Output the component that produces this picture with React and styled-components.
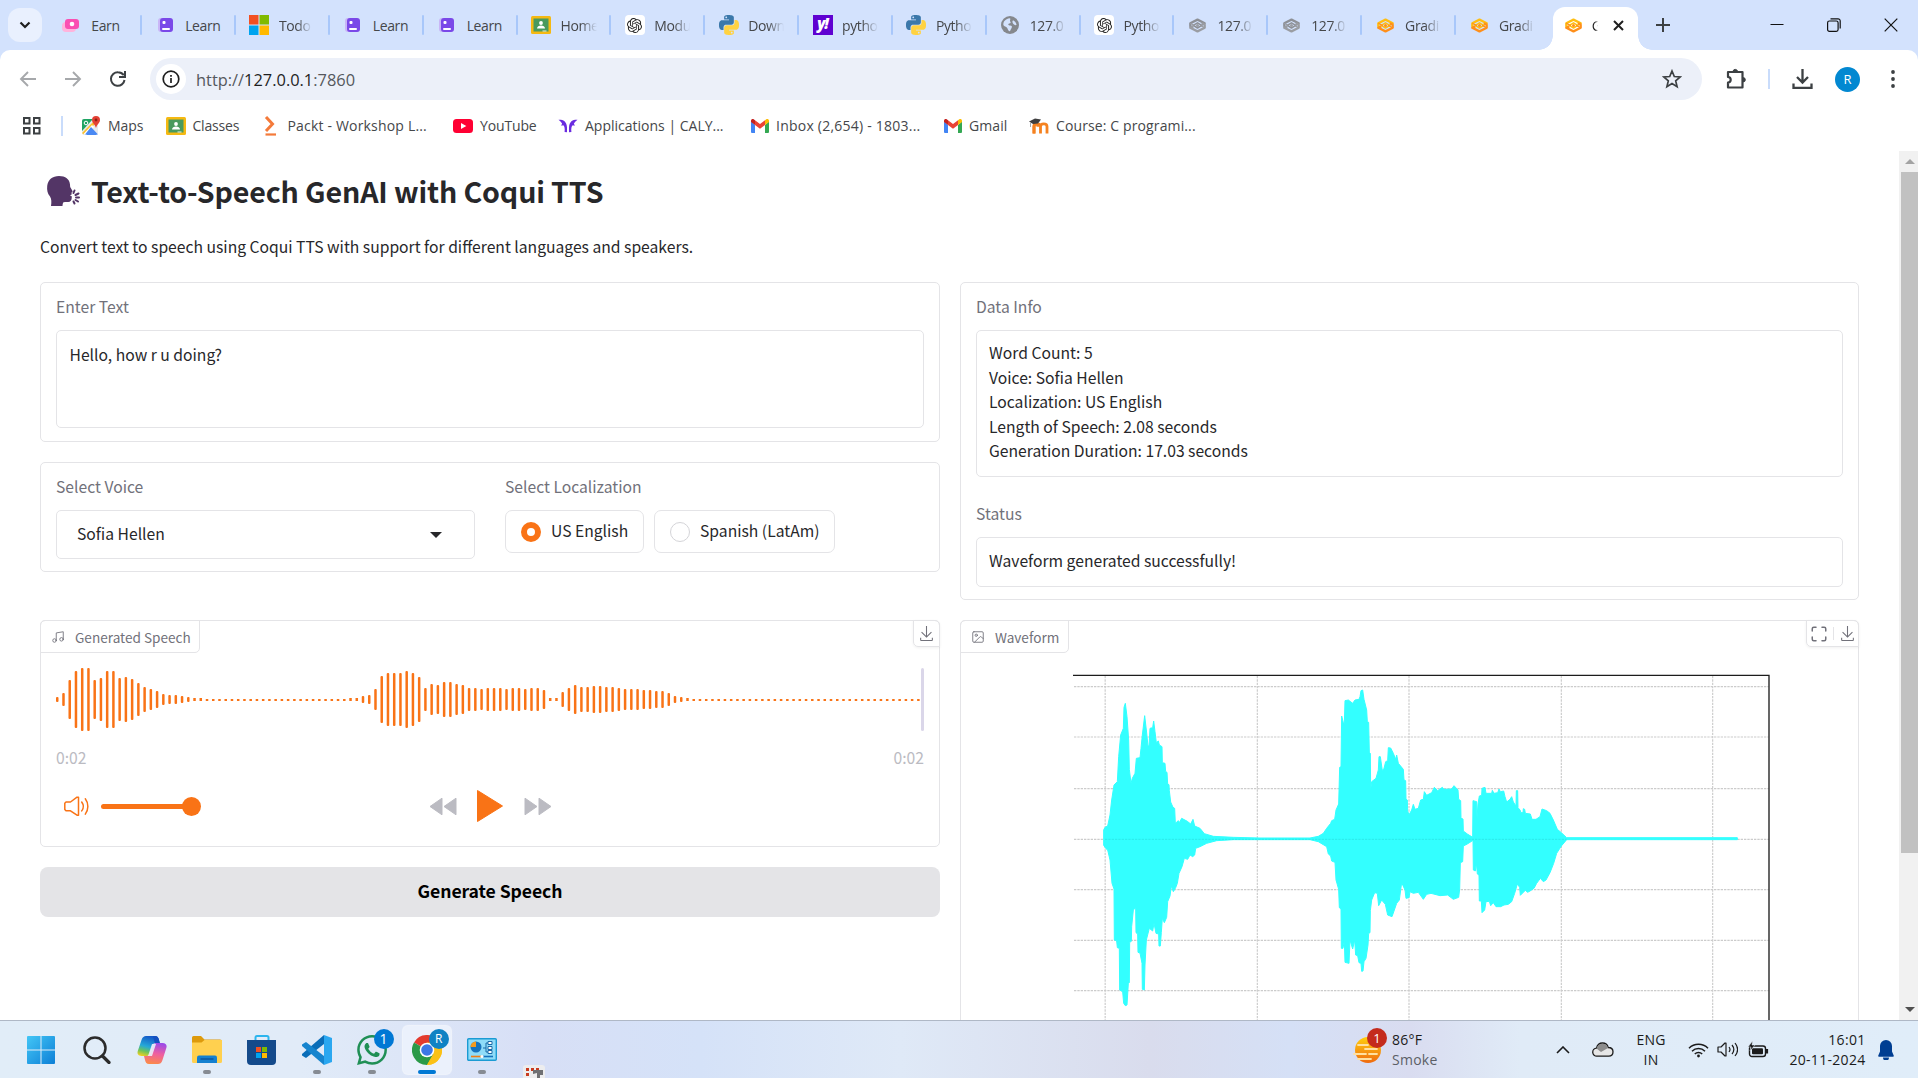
import React from "react";
import styled, { createGlobalStyle } from "styled-components";
import { Maximize, Image as ImageIcon, Music } from "lucide-react";
import { SiOpenai, SiWhatsapp } from "react-icons/si";

const ui = `"Open Sans", "Noto Sans", sans-serif`;
const body = `"Noto Sans CJK SC", "Noto Sans", sans-serif`;

const Global = createGlobalStyle`
  * { box-sizing: border-box; }
  body { margin: 0; background: #fff; overflow: hidden; }
  svg { display: block; flex: none; }
`;

const Screen = styled.div`
  width: 1918px;
  height: 1078px;
  display: flex;
  flex-direction: column;
  overflow: hidden;
  background: #fff;
`;

/* ---------- browser chrome ---------- */

const TabStrip = styled.div`
  height: 50px;
  flex: none;
  background: #d3e2fd;
  display: flex;
  align-items: center;
  padding-left: 8px;
  font: 14px/20px ${ui};
  color: #45474a;
`;
const TabSearch = styled.div`
  width: 34px;
  height: 34px;
  border-radius: 12px;
  background: #e9f0fe;
  display: flex;
  align-items: center;
  justify-content: center;
  margin-right: 5.3px;
  flex: none;
`;
const Tab = styled.div`
  width: 93.85px;
  height: 50px;
  flex: none;
  display: flex;
  align-items: center;
  padding-left: 14px;
  gap: 9px;
  position: relative;
  &::after {
    content: "";
    position: absolute;
    right: -1px;
    top: 15px;
    width: 2px;
    height: 20px;
    border-radius: 1px;
    background: ${(p) => (p.$last ? "transparent" : "#a8c7fa")};
  }
`;
const Fav = styled.div`
  width: 21px;
  display: flex;
  justify-content: center;
  flex: none;
`;
const TabTitle = styled.div`
  width: ${(p) => p.$w || 36}px;
  overflow: hidden;
  white-space: nowrap;
  letter-spacing: -0.4px;
  padding-top: 1px;
  ${(p) => p.$fade && `mask-image: linear-gradient(90deg, #000 55%, transparent 100%);`}
`;
const ActiveTab = styled.div`
  width: 85.5px;
  height: 43px;
  margin: 7px 0 0 4px;
  flex: none;
  background: #fff;
  border-radius: 12px 12px 0 0;
  display: flex;
  align-items: center;
  gap: 8px;
  padding: 0 0 7px 10px;
  position: relative;
  color: #1f1f1f;
  &::before, &::after {
    content: "";
    position: absolute;
    bottom: 0;
    width: 14px;
    height: 14px;
  }
  &::before { left: -14px; background: radial-gradient(circle at 0 0, transparent 13.5px, #fff 14px); }
  &::after { right: -14px; background: radial-gradient(circle at 100% 0, transparent 13.5px, #fff 14px); }
`;
const CloseTab = styled.div`
  margin-left: 7px;
`;
const WindowButtons = styled.div`
  margin-left: auto;
  padding-right: 20px;
  display: flex;
  gap: 43px;
  align-items: center;
`;
const NewTab = styled.div`
  margin-left: 18px;
`;
const ToolbarRow = styled.div`
  height: 58px;
  flex: none;
  display: flex;
  align-items: center;
  border-radius: 10px 10px 0 0;
  background: #fff;
`;
const ToolbarShell = styled.div`
  background: #d3e2fd;
  flex: none;
`;
const NavButtons = styled.div`
  width: 150px;
  padding-left: 19px;
  display: flex;
  gap: 27px;
  align-items: center;
`;
const Omnibox = styled.div`
  width: 1552px;
  height: 42px;
  border-radius: 21px;
  background: #ecf0f9;
  display: flex;
  align-items: center;
  padding: 0 20px 0 6px;
  flex: none;
`;
const InfoDot = styled.div`
  width: 30px;
  height: 30px;
  border-radius: 50%;
  background: #fff;
  display: flex;
  align-items: center;
  justify-content: center;
`;
const Url = styled.div`
  font: 16.4px/24px ${ui};
  letter-spacing: 0;
  margin-left: 10px;
  padding-top: 1px;
  flex: 1;
  color: #55585d;
  b { font-weight: 400; color: #1f1f1f; }
`;
const ToolbarRight = styled.div`
  display: flex;
  align-items: center;
  padding-left: 23px;
`;
const Sep = styled.div`
  width: 2px;
  height: 20px;
  background: #c9dcfb;
  margin: 0 ${(p) => p.$r}px 0 ${(p) => p.$l}px;
`;
const Avatar = styled.div`
  width: 25px;
  height: 25px;
  border-radius: 50%;
  background: #0288d1;
  color: #fff;
  font: 13px/25px ${ui};
  text-align: center;
  margin: 0 31px 0 22px;
`;
const Bookmarks = styled.div`
  height: 43px;
  flex: none;
  display: flex;
  align-items: center;
  padding: 0 0 7px 22px;
  font: 14px/20px ${ui};
  color: #45474a;
`;
const Bookmark = styled.div`
  width: ${(p) => p.$w}px;
  display: flex;
  align-items: center;
  gap: 7px;
  white-space: nowrap;
  letter-spacing: ${(p) => p.$ls}px;
`;

/* ---------- page ---------- */

const Viewport = styled.div`
  height: 869px;
  flex: none;
  display: flex;
  overflow: hidden;
`;
const Page = styled.main`
  width: 1899px;
  flex: none;
  padding: 0 40px;
  font: 15.68px/24.5px ${body};
  color: #27272a;
`;
const Heading = styled.h1`
  margin: 18px 0 0 6px;
  height: 44px;
  display: flex;
  align-items: center;
  gap: 11px;
  font: 600 28.6px/44px ${body};
  letter-spacing: -0.14px;
  white-space: nowrap;
`;
const Lead = styled.p`
  margin: 22px 0 0;
  height: 24px;
`;
const Columns = styled.div`
  margin-top: 23px;
  display: flex;
  gap: 20px;
  align-items: flex-start;
`;
const Column = styled.div`
  width: ${(p) => p.$w}px;
  display: flex;
  flex-direction: column;
`;
const Card = styled.section`
  height: ${(p) => p.$h}px;
  margin-bottom: ${(p) => p.$mb || 0}px;
  border: 1px solid #e4e4e7;
  border-radius: 5px;
  padding: ${(p) => p.$pad || "12px 15px"};
  position: relative;
  display: flex;
  flex-direction: ${(p) => (p.$row ? "row" : "column")};
`;
const Label = styled.div`
  color: #71717a;
  height: 24px;
  margin: 0 0 11px;
`;
const Field = styled.div`
  border: 1px solid #e4e4e7;
  border-radius: 5px;
  height: ${(p) => p.$h}px;
  margin-bottom: ${(p) => p.$mb || 0}px;
  padding: ${(p) => p.$pad};
  flex: none;
  white-space: pre-line;
`;
const Group = styled.div`
  width: ${(p) => p.$w}px;
  margin-right: ${(p) => p.$mr || 0}px;
`;
const Select = styled(Field)`
  display: flex;
  justify-content: space-between;
  align-items: center;
`;
const Radios = styled.div`
  display: flex;
  gap: 10px;
`;
const Radio = styled.div`
  width: ${(p) => p.$w}px;
  height: 43px;
  border: 1px solid #e4e4e7;
  border-radius: 7px;
  display: flex;
  align-items: center;
  padding-left: 15px;
  gap: 10px;
  white-space: nowrap;
`;
const Dot = styled.span`
  width: 20px;
  height: 20px;
  border-radius: 50%;
  flex: none;
  background: #fff;
  border: ${(p) => (p.$on ? "6px solid #f97316" : "1px solid #d4d4d8")};
`;
const MediaLabel = styled.div`
  position: absolute;
  left: -1px;
  top: -1px;
  height: 33px;
  width: ${(p) => p.$w}px;
  border: 1px solid #e4e4e7;
  border-radius: 5px 0 5px 0;
  display: flex;
  align-items: center;
  padding: 1px 0 0 10px;
  gap: 10px;
  color: #71717a;
  font-size: 13.6px;
  white-space: nowrap;
`;
const MediaTools = styled.div`
  position: absolute;
  right: -1px;
  top: -1px;
  height: 27px;
  width: ${(p) => p.$w}px;
  border: 1px solid #e4e4e7;
  border-radius: 0 5px 0 5px;
  box-shadow: 0 1px 3px rgba(0, 0, 0, 0.06);
  display: flex;
  align-items: center;
  justify-content: center;
  gap: 5px;
  color: #71717a;
`;
const ToolDivider = styled.i`
  width: 1px;
  height: 13px;
  background: #e4e4e7;
`;
const Bars = styled.div`
  margin-top: 35px;
  height: 63px;
  width: 868px;
  display: flex;
`;
const Times = styled.div`
  display: flex;
  justify-content: space-between;
  color: #bbbbc2;
  margin-top: 15px;
  height: 24px;
`;
const Controls = styled.div`
  display: grid;
  grid-template-columns: 1fr auto 1fr;
  align-items: center;
  height: 34px;
  margin-top: 19px;
`;
const Volume = styled.div`
  display: flex;
  align-items: center;
  gap: 12px;
  padding-left: 7px;
`;
const Slider = styled.div`
  width: 100px;
  height: 5px;
  border-radius: 3px;
  background: linear-gradient(90deg, #f97316 90px, #fff 90px);
  display: flex;
  justify-content: flex-end;
  align-items: center;
  &::after {
    content: "";
    width: 19px;
    height: 19px;
    border-radius: 50%;
    background: #f97316;
  }
`;
const Transport = styled.div`
  display: flex;
  align-items: center;
  gap: 19.5px;
`;
const Generate = styled.button`
  height: 50px;
  border: 0;
  border-radius: 8px;
  background: #e4e4e7;
  color: #000;
  padding: 0 0 2px;
  font: 600 17.6px/28px ${body};
  letter-spacing: -0.08px;
`;
const PlotHolder = styled.div`
  padding-left: 99px;
`;
const Scrollbar = styled.div`
  width: 19px;
  background: #f1f1f1;
  display: flex;
  flex-direction: column;
  align-items: flex-end;
`;
const Thumb = styled.div`
  width: 17px;
  height: 681px;
  background: #c1c1c1;
`;
const Arrow = styled.div`
  width: 17px;
  height: 21px;
  display: flex;
  align-items: center;
  justify-content: center;
  margin-top: ${(p) => (p.$end ? "auto" : 0)};
`;

/* ---------- taskbar ---------- */

const Taskbar = styled.footer`
  height: 58px;
  flex: none;
  border-top: 1px solid #afb8c6;
  background: linear-gradient(90deg, #e1edf8 0, #e1ebf8 300px, #d7dff6 540px, #d5e2f8 700px, #dfe9f7 900px, #d9dced 1150px, #d5e0f6 1290px, #d9dcf0 1410px, #e0ebf7 1520px, #e0edf9 1918px);
  display: flex;
  font: 14px/20px ${ui};
  color: #1b1b1b;
`;
const Apps = styled.div`
  display: flex;
  padding-left: 14px;
  width: 1353px;
`;
const TaskApp = styled.div`
  width: 55.1px;
  height: 57px;
  flex: none;
  position: relative;
  display: flex;
  justify-content: center;
  align-items: center;
`;
const AppTile = styled.div`
  width: 48px;
  height: 48px;
  border-radius: 5px;
  display: flex;
  align-items: center;
  justify-content: center;
  ${(p) => p.$active && "background: #ebf1fc; box-shadow: 0 0 1px 1px rgba(255,255,255,.6);"}
`;
const Running = styled.i`
  position: absolute;
  bottom: 4px;
  width: ${(p) => (p.$active ? 18 : 8)}px;
  height: 4px;
  border-radius: 2px;
  background: ${(p) => (p.$active ? "#0078d4" : "#868b93")};
`;
const Badge = styled.span`
  position: absolute;
  left: ${(p) => p.$x}px;
  top: ${(p) => p.$y}px;
  width: 20px;
  height: 20px;
  border-radius: 50%;
  background: ${(p) => p.$c};
  color: #fff;
  font: ${(p) => p.$s || 13}px/20px ${ui};
  text-align: center;
`;
const Stray = styled.div`
  align-self: flex-end;
  margin-left: 13px;
`;
const Weather = styled.div`
  display: flex;
  position: relative;
  align-items: center;
  gap: 11px;
  width: 203px;
`;
const TwoLine = styled.div`
  padding-top: 1px;
  text-align: ${(p) => p.$align || "left"};
  letter-spacing: ${(p) => p.$ls || 0}px;
  white-space: nowrap;
  span { color: #5c5f66; }
`;
const Tray = styled.div`
  display: flex;
  align-items: center;
  flex: 1;
`;
const TrayItem = styled.div`
  width: ${(p) => p.$w}px;
  flex: none;
  display: flex;
  justify-content: ${(p) => p.$j || "flex-start"};
`;

/* ---------- icons ---------- */

const LearnIcon = () => (
  <svg width="16" height="16" viewBox="0 0 16 16">
    <rect x="0" y="1" width="14" height="14" rx="3" fill="#c9b6f7" />
    <rect x="2" y="1" width="13" height="14" rx="3" fill="#7a49e8" />
    <rect x="4.500" y="4" width="3" height="3" rx="1" fill="#fff" />
    <rect x="4" y="11" width="8" height="2" rx="1" fill="#fff" />
  </svg>
);
const EarnIcon = () => (
  <svg width="19" height="16" viewBox="0 0 19 16">
    <rect x="0" y="5" width="14" height="10" rx="4" fill="#ffb3dc" />
    <rect x="3" y="2" width="14" height="10" rx="3" fill="#fa4fb2" />
    <circle cx="10" cy="7" r="2.300" fill="#fff" />
  </svg>
);
const MsIcon = () => (
  <svg width="20" height="20" viewBox="0 0 20 20">
    <path fill="#f25022" d="M0 0h9.500v9.500H0z" />
    <path fill="#7fba00" d="M10.500 0H20v9.500h-9.500z" />
    <path fill="#00a4ef" d="M0 10.500h9.500V20H0z" />
    <path fill="#ffb900" d="M10.500 10.500H20V20h-9.500z" />
  </svg>
);
const ClassIcon = () => (
  <svg width="20" height="18" viewBox="0 0 20 18">
    <rect width="20" height="18" rx="1.500" fill="#f5b912" />
    <rect x="2.500" y="2.500" width="15" height="13" fill="#4a9a5d" />
    <circle cx="10" cy="7" r="1.900" fill="#fff" />
    <path d="M6 12.500c0-2 2-3 4-3s4 1 4 3z" fill="#fff" />
    <path d="M11.500 14.500h4v1h-4z" fill="#e8f3e9" />
  </svg>
);
const GptTile = styled.div`
  width: 20px;
  height: 20px;
  border-radius: 4px;
  background: #fff;
  display: flex;
  align-items: center;
  justify-content: center;
  color: #222;
`;
const GptIcon = () => (
  <GptTile>
    <SiOpenai size={15} />
  </GptTile>
);
const PyIcon = () => (
  <svg width="20" height="20" viewBox="0 0 24 24">
    <path fill="#3b78aa" d="M14.250.18l.9.200.730.260.590.300.450.320.340.340.250.340.160.330.100.300.040.260.020.200-.010.130V8.500l-.050.630-.130.550-.210.460-.260.380-.300.310-.330.250-.350.190-.350.140-.330.100-.300.070-.260.040-.210.020H8.770l-.690.050-.590.140-.500.220-.410.270-.330.320-.270.350-.200.360-.150.370-.100.350-.070.320-.040.270-.020.210v3.060H3.170l-.210-.030-.280-.070-.320-.120-.350-.180-.360-.260-.360-.360-.350-.460-.320-.590-.280-.730-.210-.880-.140-1.050-.050-1.230.060-1.220.160-1.040.240-.870.320-.710.360-.570.400-.440.420-.330.420-.240.400-.160.360-.100.320-.050.240-.010h.160l.060.010h8.160v-.830H6.180l-.010-2.750-.020-.370.050-.340.110-.310.170-.280.250-.260.310-.230.380-.200.440-.180.510-.150.580-.120.640-.100.710-.060.770-.040.840-.020 1.270.050zm-6.300 1.980l-.230.330-.080.410.080.410.230.340.330.220.410.090.410-.090.330-.220.230-.340.080-.410-.080-.410-.230-.330-.330-.220-.410-.090-.410.090z" />
    <path fill="#ffd242" d="M21.040 6.110l.280.060.320.120.350.180.360.270.360.350.350.470.320.590.280.730.210.880.140 1.040.050 1.230-.060 1.230-.160 1.040-.240.860-.320.710-.360.570-.400.450-.420.330-.420.240-.400.160-.360.090-.320.050-.240.020-.160-.010h-8.220v.820h5.840l.010 2.760.020.360-.050.340-.110.310-.170.290-.250.250-.310.240-.380.200-.440.170-.510.150-.580.130-.640.090-.710.070-.770.040-.840.010-1.270-.040-1.070-.140-.900-.200-.730-.250-.590-.300-.450-.330-.340-.340-.250-.340-.160-.330-.100-.300-.040-.250-.020-.200.010-.130v-5.340l.050-.640.130-.540.210-.460.260-.380.300-.320.330-.240.350-.200.350-.140.330-.100.300-.060.260-.040.210-.020.130-.010h5.840l.690-.050.590-.140.500-.210.410-.280.330-.320.270-.350.200-.360.150-.360.100-.350.070-.320.040-.280.020-.210V6.070h2.090l.140.010zm-6.470 14.250l-.230.330-.080.410.080.410.230.330.330.230.410.080.410-.080.330-.230.230-.330.080-.410-.080-.410-.230-.330-.330-.230-.410-.080-.410.080z" />
  </svg>
);
const YahooTile = styled.div`
  width: 20px;
  height: 20px;
  background: #5f01d1;
  color: #fff;
  font: italic 800 15px/17px ${ui};
  letter-spacing: -1px;
  text-align: center;
`;
const GlobeIcon = () => (
  <svg width="18" height="18" viewBox="0 0 18 18">
    <circle cx="9" cy="9" r="9" fill="#85888d" />
    <path d="M3 5.500C4.500 3.500 6.500 2.300 9 2.200c1 1-.5 2.200.2 3.200 1 1 .3 2-1 2.100C6.500 8 7.500 9.500 9 9.600c2 .2 2.300 1.300 1.600 2.400-.7 1-1 2-1.600 3.300-2 .2-2-2.500-3.200-3.700C4.600 10.500 2.300 10 2.300 8.500c0-1 .2-2 .7-3zM12 4.500c1.500 0 3.500 2.500 3.500 4.500-1.500.5-3-.5-3.500-1.500s-1-2.500 0-3z" fill="#d3e2fd" />
  </svg>
);
const GradioIcon = ({ gray }) => {
  const a = gray ? "#9a9da3" : "#ff8f1a";
  const b = gray ? "#8d9096" : "#ffbe12";
  return (
    <svg width="17" height="15" viewBox="0 0 17 15" fill="none" strokeLinejoin="round">
      <path d="M4 9.800L1.300 8.200V5.200L8.500 1.600l7.200 3.600-3 1.500" stroke={b} strokeWidth="2.300" />
      <path d="M13 5.200l2.700 1.600v3L8.500 13.400 1.300 9.800l3-1.500" stroke={a} strokeWidth="2.300" />
      <path d="M4.300 7.300l4.200-2.500 4.200 2.500-4.200 2.700z" stroke={b} strokeWidth="1.500" />
      <circle cx="8.500" cy="7.400" r="1.500" fill={a} />
      <path d="M1.300 5.200l4.500 2.400M15.700 9.800l-4.500-2.400" stroke={a} strokeWidth="1.300" />
    </svg>
  );
};
const MapsIcon = () => (
  <svg width="20" height="20" viewBox="0 0 20 20">
    <rect x="1" y="3" width="16" height="16" rx="2" fill="#e8eaed" />
    <path d="M1 5a2 2 0 012-2h9L1 15z" fill="#1fa463" />
    <path d="M1 17L14 4l2 2L3 19z" fill="#fbc02d" />
    <path d="M9 12l7 7H3z" fill="#4a89f3" />
    <path d="M2 18.500L11 9l2 2-8 8z" fill="#fff" />
    <path d="M10 11l7 7.500H4z" fill="#4a89f3" />
    <path d="M15 0a4 4 0 00-4 4c0 3 3 4 4 8 1-4 4-5 4-8a4 4 0 00-4-4z" fill="#e34133" />
    <circle cx="15" cy="4" r="1.400" fill="#8c1f16" />
    <circle cx="5" cy="7" r="1.800" fill="none" stroke="#fff" />
  </svg>
);
const PacktIcon = () => (
  <svg width="20" height="20" viewBox="0 0 20 20" fill="none" stroke="#f47a3a" strokeWidth="3">
    <path d="M5 1l6.500 7L5 15" />
    <path d="M4.500 18.500h10.500" strokeWidth="2.200" />
  </svg>
);
const YouTubeIcon = () => (
  <svg width="20" height="14" viewBox="0 0 20 14">
    <rect width="20" height="14" rx="3.500" fill="#ff0033" />
    <path d="M8 4l5.300 3L8 10z" fill="#fff" />
  </svg>
);
const CalyIcon = () => (
  <svg width="20" height="14" viewBox="0 0 20 14">
    <path fill="#6a2be0" d="M.5.8c4-.3 8.300 1.200 8.500 7.700v4.700L6.600 13c.4-3.500 0-5.500-1.300-6.800L3.200 6.800l.9-2.300C3.200 3 2 1.800.5.8z" />
    <path fill="#6a2be0" d="M19.500.8c-4-.3-8.300 1.200-8.500 7.700v4.700l2.400-.2c-.4-3.500 0-5.500 1.300-6.800l2.100.6-.9-2.300c.9-1.500 2.100-2.700 3.600-3.700z" />
  </svg>
);
const GmailIcon = () => (
  <svg width="18" height="14" viewBox="0 0 18 14">
    <path d="M0 2.500V13a1 1 0 001 1h3V6z" fill="#4285f4" />
    <path d="M18 2.500V13a1 1 0 01-1 1h-3V6z" fill="#34a853" />
    <path d="M14 1.200V6l4-3V1.800C18 .2 16.300-.5 15 .4z" fill="#fbbc04" />
    <path d="M0 1.800V3l4 3V1.200L3 .4C1.700-.5 0 .2 0 1.800z" fill="#c5221f" />
    <path d="M4 1.200V6l5 3.800L14 6V1.200L9 5z" fill="#ea4335" />
  </svg>
);
const MoodleIcon = () => (
  <svg width="20" height="16" viewBox="0 0 20 16" fill="none">
    <path d="M5 15.500V8.800c0-4 4-4 4 0" stroke="#f58220" strokeWidth="3" />
    <path d="M5 15.500V8.500c0-3.500 6.500-3.500 6.500 0v7M11.500 15.500v-7c0-3.500 6.500-3.500 6.500 0v7" stroke="#f58220" strokeWidth="2.800" />
    <path d="M0 3.500L6 .5l6 1-3 4-5 .5z" fill="#3f3f40" />
    <path d="M1.500 4v5" stroke="#a8a8a8" />
  </svg>
);
const DownloadIcon = ({ size = 17 }) => (
  <svg width={size} height={size} viewBox="0 0 32 32" fill="currentColor">
    <path d="M26 24v4H6v-4H4v4a2 2 0 0 0 2 2h20a2 2 0 0 0 2-2v-4zm0-10l-1.410-1.410L17 20.170V2h-2v18.170l-7.590-7.580L6 14l10 10l10-10z" />
  </svg>
);
const HeadIcon = () => (
  <svg width="34" height="32" viewBox="0 0 34 32">
    <path fill="#533566" d="M5 31c.6-4 .6-7-1-9.500C1.500 18.500.8 15 1.200 11 2 4.500 6.500 1 13 1c6.500 0 10.500 3 11 8.500.1 1.600 0 2.300.8 3.600l1.700 2.800c.3.700 0 1.100-1 1.500l.2 2-1.800.9 1.800 1c.3 2-.2 4.700-2 5.400-1.800.5-4.200 0-6.200.5-.8.800-.9 2.300-1 3.800z" />
    <g stroke="#533566" strokeWidth="2" strokeLinecap="round">
      <path d="M27.500 18l1-2.500M29.500 20l3-1.500M30 22.500h3M29.500 25l2.500 1.500M27.500 26.500l1 2" />
    </g>
  </svg>
);
const SpeakerIcon = () => (
  <svg width="26" height="21" viewBox="0 0 26 21" fill="none" stroke="#f97316" strokeWidth="1.500" strokeLinejoin="round" strokeLinecap="round">
    <path d="M3 6h4.500L14 1.200h1.500v18H14L7.500 14.800H3L1.800 13.500V7.200z" />
    <path d="M18.700 6c2 2.700 2 6.200 0 8.900M22.300 2.800c3.400 4.500 3.400 10.800 0 15.300" />
  </svg>
);
const SkipIcon = ({ back }) => (
  <svg width="28" height="19" viewBox="0 0 28 19" fill="#bbbbc2" stroke="#bbbbc2" strokeLinejoin="round">
    <g transform={back ? "translate(28 0) scale(-1 1)" : undefined}>
      <path d="M1 1.200L13 9.500 1 17.800zM15 1.200l12 8.300-12 8.300z" />
    </g>
  </svg>
);

/* ---------- audio bars ---------- */

const flat = (n) => Array(n).fill(2);
const barHeights = [
  5, 13, 39, 57, 63, 63, 39, 43, 57, 57, 43, 45, 41, 33, 25, 21, 17, 11, 9, 9, 7, 5, 3, 3,
  ...flat(23),
  3, 3, 7, 9, 21, 47, 53, 53, 53, 57, 53, 45, 23, 31, 29, 35, 35, 31, 29, 23, 23, 21, 23, 23,
  23, 21, 23, 23, 21, 23, 23, 19, 3, 3, 15, 23, 29, 25, 25, 27, 27, 25, 25, 23, 21, 21, 21,
  19, 19, 17, 17, 13, 7, 5, 3,
  ...flat(37),
];
const AudioBars = () => (
  <svg width="868" height="63" viewBox="0 0 868 63">
    {barHeights.map((h, i) => (
      <rect key={i} x={i * 6.24} y={31.500 - h / 2 + (h === 2 ? 0.5 : 0)} width="2.500" height={h} rx={h > 3 ? 1 : 0} fill="#f97316" />
    ))}
    <rect x="865" y="0" width="3" height="63" rx="1.500" fill="#dad6e9" />
  </svg>
);

/* ---------- plot ---------- */

const envelope =
  "131,660 135,652 143,648 150,615 155,570 162,525 172,515 176,440 182,375 190,355 192,292 196,280 201,320 206,390 208,478 213,520 217,505 225,490 229,445 240,443 243,415 247,375 254,317 259,360 264,408 267,408 270,355 278,353 281,333 285,365 289,398 295,393 298,405 306,410 307,458 315,460 317,485 321,487 323,522 327,524 328,542 332,576 339,592 344,595 346,640 355,632 358,638 365,625 382,634 392,642 399,628 404,648 420,655 433,671 460,679 520,682 600,684 750,684 775,679 790,670 800,655 812,640 815,632 824,628 828,600 836,582 839,472 843,470 845,318 850,338 853,340 855,272 865,270 878,280 885,270 897,268 900,260 903,242 908,240 912,268 920,300 922,335 926,337 928,427 931,430 932,540 935,515 948,505 955,480 957,440 961,440 967,482 972,475 977,455 983,452 985,413 992,414 1000,430 1007,448 1010,435 1015,460 1030,478 1032,510 1037,512 1038,568 1042,570 1043,603 1047,615 1055,600 1060,583 1065,598 1075,595 1082,570 1090,568 1093,545 1100,556 1115,548 1123,532 1133,542 1147,532 1152,538 1175,537 1182,527 1194,540 1196,568 1202,572 1203,625 1209,627 1210,663 1222,672 1238,682 " +
  "1239,572 1250,575 1251,625 1254,582 1258,558 1265,556 1266,535 1275,532 1278,550 1295,550 1297,541 1302,550 1313,548 1317,537 1321,545 1331,543 1335,560 1340,576 1350,568 1355,560 1360,576 1368,588 1369,542 1373,542 1374,593 1380,600 1383,608 1389,608 1390,596 1394,598 1396,610 1411,612 1416,628 1428,628 1440,620 1446,597 1460,602 1470,610 1480,630 1492,658 1504,668 1520,683 2032,683 " +
  "2032,689 1520,689 1504,708 1490,730 1481,760 1470,788 1458,810 1450,815 1441,805 1430,820 1422,835 1410,843 1403,847 1396,841 1381,856 1379,832 1372,822 1364,850 1355,875 1345,883 1332,885 1322,890 1308,890 1300,878 1292,887 1288,874 1278,875 1274,900 1266,908 1264,873 1258,873 1257,795 1252,792 1249,758 1246,783 1240,780 1239,691 " +
  "1222,702 1210,708 1208,755 1201,758 1199,838 1196,862 1180,868 1163,855 1140,857 1113,850 1100,853 1090,868 1075,847 1060,850 1050,845 1047,863 1038,865 1035,840 1025,818 1018,870 1010,880 1003,900 996,920 983,915 976,883 965,870 956,887 952,850 944,848 935,870 931,902 930,968 926,970 924,1005 918,1045 912,1055 909,1083 905,1084 903,1060 897,1058 893,1037 887,1035 884,990 878,1017 870,990 867,1060 855,1057 853,992 849,1015 844,1015 843,897 838,893 836,838 828,810 825,757 815,753 812,738 805,732 800,710 790,704 775,695 750,689 520,689 470,692 440,700 420,710 407,715 404,735 398,740 390,735 383,748 373,745 366,770 357,790 352,820 347,833 340,845 334,828 330,858 323,875 320,922 313,938 307,925 304,967 301,1008 297,1008 296,972 288,970 282,940 278,963 268,955 259,990 255,1065 253,1140 247,1138 246,1060 240,1029 234,1027 233,972 228,968 227,893 220,900 215,950 214,994 209,997 208,1118 205,1120 201,1185 196,1187 191,1180 188,1145 179,1140 178,1015 172,1013 170,993 163,990 162,837 156,820 150,750 143,720 138,716 131,706";

const Plot = () => (
  <svg width="720" height="400" viewBox="0 135 2160 1200">
    <g stroke="#cccccc" strokeWidth="3.500" strokeDasharray="7 3">
      {[230, 381, 536, 688, 839, 991, 1142, 1294].map((y) => (
        <line key={y} x1="42" x2="2126" y1={y} y2={y} />
      ))}
      {[135.5, 592, 1047, 1504, 1958].map((x) => (
        <line key={x} x1={x} x2={x} y1="198" y2="1335" />
      ))}
    </g>
    <polygon points={envelope} fill="#33ffff" stroke="#33ffff" strokeWidth="3" strokeLinejoin="round" />
    <path d="M135 688H1520" stroke="#2ae6e6" strokeWidth="2.500" strokeDasharray="7 3" />
    <path d="M39 196H2127V1335" fill="none" stroke="#1c1c1c" strokeWidth="4" />
  </svg>
);

/* ---------- taskbar icons ---------- */

const StartIcon = () => (
  <svg width="30" height="30" viewBox="0 0 30 30">
    <defs>
      <linearGradient id="st" x1="0" y1="0" x2="1" y2="1" gradientUnits="objectBoundingBox">
        <stop offset="0" stopColor="#43c6f6" />
        <stop offset="1" stopColor="#0d7fd6" />
      </linearGradient>
    </defs>
    <path fill="url(#st)" d="M0 2a1 1 0 011-1h12.500v13.500H0zM14.500 1H27a1 1 0 011 1v12.500H14.500zM0 15.500h13.500V29H1a1 1 0 01-1-1zM14.500 15.500H28V28a1 1 0 01-1 1H14.500z" />
  </svg>
);
const FindIcon = () => (
  <svg width="28" height="28" viewBox="0 0 28 28" fill="none" stroke="#2b2b2b">
    <circle cx="12" cy="12" r="10.500" strokeWidth="2.500" />
    <path d="M19.500 20l6.500 6.500" strokeWidth="3.200" strokeLinecap="round" />
  </svg>
);
const CopilotIcon = () => (
  <svg width="30" height="28" viewBox="0 0 30 28">
    <defs>
      <linearGradient id="cpA" x1="0.500" y1="0" x2="0.200" y2="1">
        <stop offset="0" stopColor="#1458c8" />
        <stop offset="0.500" stopColor="#25a8d8" />
        <stop offset="0.750" stopColor="#6bc45c" />
        <stop offset="1" stopColor="#f4d01f" />
      </linearGradient>
      <linearGradient id="cpB" x1="0.600" y1="0" x2="0.400" y2="1">
        <stop offset="0" stopColor="#9c4be8" />
        <stop offset="0.500" stopColor="#ef5fa0" />
        <stop offset="1" stopColor="#fb8a4a" />
      </linearGradient>
    </defs>
    <path fill="url(#cpA)" d="M9 0h9c2.500 0 3.300 1.500 4 4l.8 3h-4c-2 0-3 1-3.500 3l-2 7c-.6 2-1.600 3-3.800 3H4.500C1.500 20 0 18 .7 15.300L4.500 4C5.500 1 7 0 9 0z" />
    <path fill="url(#cpB)" d="M21 28h-9c-2.500 0-3.300-1.500-4-4l-1-4h3c2 0 3-1 3.500-3l2.300-7c.6-2 1.600-3 3.800-3h6c3 0 4.600 2 3.800 4.700L25.500 24c-1 3-2.500 4-4.500 4z" />
    <path fill="#1450c0" d="M16 0h2c2.500 0 3.300 1.500 4 4l.8 3h-5z" />
    <path fill="#eaf0fb" d="M15 8h4l-4 12h-4z" opacity=".9" />
  </svg>
);
const FolderIcon = () => (
  <svg width="30" height="28" viewBox="0 0 30 28">
    <path d="M0 1.500A1.500 1.500 0 011.500 0H9l3.500 3.500H28A2 2 0 0130 5.500V12H0z" fill="#dd9a0c" />
    <path d="M0 6.500h9.500L12.500 4H30v21.500a1.500 1.500 0 01-1.500 1.500h-27A1.500 1.500 0 010 25.500z" fill="#ffd04f" />
    <path d="M5 27v-5.500A2 2 0 017 19.500h16a2 2 0 012 2V27z" fill="#1480d0" />
    <path d="M8.500 23h13" stroke="#0b4f96" strokeWidth="1.300" />
  </svg>
);
const StoreIcon = () => (
  <svg width="30" height="30" viewBox="0 0 30 30">
    <path d="M8.500 7V2.500A1.500 1.500 0 0110 1h10a1.500 1.500 0 011.500 1.500V7" stroke="#2cb5ee" strokeWidth="2" fill="none" />
    <path d="M0 5h29v21a4 4 0 01-4 4H4a4 4 0 01-4-4z" fill="#144a8b" />
    <path fill="#f25022" d="M9 12h5v5H9z" />
    <path fill="#7fba00" d="M15 12h5v5h-5z" />
    <path fill="#00a4ef" d="M9 18h5v5H9z" />
    <path fill="#ffb900" d="M15 18h5v5h-5z" />
  </svg>
);
const CodeIcon = () => (
  <svg width="30" height="30" viewBox="0 0 30 30">
    <path d="M22 0v9L4 23 0 20.500v-1.500z" fill="#0a6db8" />
    <path d="M22 30v-9L4 7 0 9.500v1.500z" fill="#1684ce" />
    <path d="M22 0l8 3v24l-8 3z" fill="#2aa7f0" />
  </svg>
);
const ChromeIcon = () => (
  <svg width="30" height="30" viewBox="0 0 30 30">
    <path d="M15 15L2 7.500A15 15 0 0128 7.500z" fill="#e33b2e" />
    <path d="M15 15l13-7.500A15 15 0 0115 30z" fill="#fbc116" />
    <path d="M15 15v15A15 15 0 012 7.500z" fill="#2b9a48" />
    <path d="M15 30l6.500-11.200L15 15 8.500 18.700z" fill="#2b9a48" />
    <path d="M21.500 18.800L15 30A15 15 0 0028 7.500H15z" fill="#fbc116" />
    <circle cx="15" cy="15" r="7.300" fill="#fff" />
    <circle cx="15" cy="15" r="5.800" fill="#3b78e7" />
  </svg>
);
const PanelIcon = () => (
  <svg width="30" height="23" viewBox="0 0 30 23">
    <rect x=".7" y=".7" width="28.600" height="21.600" rx="1" fill="#8fdcf8" stroke="#1b9bd3" strokeWidth="1.400" />
    <circle cx="9" cy="9" r="5.500" fill="#1673bd" />
    <path d="M9 9V3.500A5.500 5.500 0 003.500 9z" fill="#f59a1d" />
    <path d="M16 10h3M19 5v9M19 5h2M19 14h2" stroke="#1a6aa8" fill="none" />
    <path d="M21 3.500h4v3h-4zM21 8.500h4v3h-4zM21 12.500h4v3h-4z" fill="#fff" stroke="#1a6aa8" />
    <path d="M4 18.500h12" stroke="#f07d13" strokeWidth="1.600" />
    <path d="M16 18.500h10" stroke="#1673bd" strokeWidth="1.600" />
    <circle cx="15" cy="18.500" r="1.500" fill="#fff" />
  </svg>
);
const StrayIcon = () => (
  <svg width="22" height="13" viewBox="0 0 22 13">
    <rect width="22" height="16" rx="3" fill="#ededee" />
    <path d="M3 3h3v3H3zM8 3h3v3H8zM13 3h3v3h-3zM3 8h3v3H3z" fill="#c83b1f" />
    <path d="M10 5h10v5h-3v3h-3V8l-4 1z" fill="#6f7073" />
  </svg>
);
const SmokeIcon = () => (
  <svg width="28" height="28" viewBox="0 0 28 28">
    <defs>
      <linearGradient id="sun" x1="0" y1="0" x2="0" y2="1">
        <stop offset="0" stopColor="#ffcf0d" />
        <stop offset="1" stopColor="#ef6a10" />
      </linearGradient>
    </defs>
    <circle cx="15" cy="14" r="13" fill="url(#sun)" />
    <path d="M5 9h10M12 13h12M1 18h12M16 18h8M5 23h13" stroke="#ffe0a0" strokeWidth="1.800" strokeLinecap="round" />
  </svg>
);

const tabs = [
  ["Earn", <EarnIcon />], ["Learn", <LearnIcon />], ["Todo", <MsIcon />, 1, 33], ["Learn", <LearnIcon />],
  ["Learn", <LearnIcon />], ["Home", <ClassIcon />, 1], ["Modu", <GptIcon />, 1], ["Down", <PyIcon />, 1],
  ["pytho", <YahooTile>y!</YahooTile>, 1], ["Pytho", <PyIcon />, 1], ["127.0", <GlobeIcon />, 1],
  ["Pytho", <GptIcon />, 1], ["127.0", <GradioIcon gray />, 1], ["127.0", <GradioIcon gray />, 1],
  ["Gradi", <GradioIcon />, 1], ["Gradi", <GradioIcon />, 1],
];
const bookmarks = [
  ["Maps", <MapsIcon />, 84.5, -0.1], ["Classes", <ClassIcon />, 95, -0.2], ["Packt - Workshop L...", <PacktIcon />, 192.5, 0.18],
  ["YouTube", <YouTubeIcon />, 105, -0.15], ["Applications | CALY...", <CalyIcon />, 193, 0],
  ["Inbox (2,654) - 1803...", <GmailIcon />, 193, 0.23], ["Gmail", <GmailIcon />, 85, 0.1], ["Course: C programi...", <MoodleIcon />, 170, 0.12],
];
const apps = [
  { icon: <StartIcon /> }, { icon: <FindIcon /> }, { icon: <CopilotIcon /> }, { icon: <FolderIcon />, run: 1 },
  { icon: <StoreIcon /> }, { icon: <CodeIcon />, run: 1 },
  { icon: <SiWhatsapp size={30} color="#1f8f55" />, run: 1, badge: ["1", "#0078d4", 14] },
  { icon: <ChromeIcon />, run: 1, active: 1, badge: ["R", "#0f82c4", 12] }, { icon: <PanelIcon />, run: 1 },
];

export default function App() {
  return (
    <Screen>
      <Global />
      <TabStrip>
        <TabSearch>
          <svg width="12" height="8" viewBox="0 0 12 8" fill="none" stroke="#1f1f1f" strokeWidth="2.200"><path d="M1.500 1.500L6 6l4.500-4.500" /></svg>
        </TabSearch>
        {tabs.map(([t, icon, fade, w], i) => (
          <Tab key={i} $last={i === tabs.length - 1}>
            <Fav>{icon}</Fav>
            <TabTitle $fade={fade} $w={w}>{t}</TabTitle>
          </Tab>
        ))}
        <ActiveTab>
          <Fav><GradioIcon /></Fav>
          <TabTitle $w={6.5} $fade>G</TabTitle>
          <CloseTab>
            <svg width="11" height="11" viewBox="0 0 11 11" stroke="#1f1f1f" strokeWidth="2"><path d="M1 1l9 9M10 1l-9 9" /></svg>
          </CloseTab>
        </ActiveTab>
        <NewTab>
          <svg width="14" height="14" viewBox="0 0 14 14" stroke="#3c4043" strokeWidth="2"><path d="M7 0v14M0 7h14" /></svg>
        </NewTab>
        <WindowButtons>
          <svg width="14" height="14" viewBox="0 0 14 14" stroke="#111"><path d="M.5 6.500h13" /></svg>
          <svg width="14" height="14" viewBox="0 0 14 14" stroke="#111" fill="none" strokeWidth="1.200"><rect x=".6" y="3" width="10.500" height="10.400" rx="1.800" /><path d="M3.500.8h7.500a2.200 2.200 0 012.200 2.200v7.500" /></svg>
          <svg width="14" height="14" viewBox="0 0 14 14" stroke="#111" strokeWidth="1.200"><path d="M.7.7l12.600 12.600M13.300.7L.7 13.300" /></svg>
        </WindowButtons>
      </TabStrip>
      <ToolbarShell>
        <ToolbarRow>
          <NavButtons>
            <svg width="18" height="16" viewBox="0 0 18 16" fill="none" stroke="#a6a8ab" strokeWidth="1.900"><path d="M17 8H2M9 1L2 8l7 7" /></svg>
            <svg width="18" height="16" viewBox="0 0 18 16" fill="none" stroke="#a6a8ab" strokeWidth="1.900"><path d="M1 8h15M9 1l7 7-7 7" /></svg>
            <svg width="18" height="18" viewBox="0 0 18 18" fill="none" stroke="#3c4043" strokeWidth="2"><path d="M15.500 10A6.800 6.800 0 119 2.200c2.500 0 4.300 1 5.800 2.900" /><path d="M16 1v6h-6" /></svg>
          </NavButtons>
          <Omnibox>
            <InfoDot>
              <svg width="18" height="18" viewBox="0 0 18 18" fill="none" stroke="#1f1f1f" strokeWidth="1.700"><circle cx="9" cy="9" r="7.800" /><path d="M9 8v5M9 5v1.700" /></svg>
            </InfoDot>
            <Url>http://<b>127.0.0.1</b>:7860</Url>
            <svg width="20" height="20" viewBox="0 0 20 20" fill="none" stroke="#3c4043" strokeWidth="1.700"><path d="M10 2l2.300 5.500 5.900.5-4.500 3.900 1.400 5.800L10 14.600l-5.100 3.100 1.400-5.800L1.800 8l5.900-.5z" /></svg>
          </Omnibox>
          <ToolbarRight>
            <svg width="22" height="22" viewBox="0 0 22 22" fill="none" stroke="#3c4043" strokeWidth="2.200"><path d="M3 4h14.500v15.500H3v-4.800c3.600-.5 3.600-5.300 0-5.800z" strokeLinejoin="round" /><path d="M8 3.200a2.300 2.300 0 014.500 0zM18.500 9.500a2.300 2.300 0 010 4.500z" fill="#3c4043" strokeWidth="1" /></svg>
            <Sep $l={21} $r={22} />
            <svg width="21" height="21" viewBox="0 0 21 21" fill="none" stroke="#3c4043" strokeWidth="2.300"><path d="M10.500 0v13M5 8l5.500 5.500L16 8M1.500 14.500v4.300h18v-4.300" /></svg>
            <Avatar>R</Avatar>
            <svg width="4" height="20" viewBox="0 0 4 20" fill="#3c4043"><circle cx="2" cy="3" r="1.900" /><circle cx="2" cy="10" r="1.900" /><circle cx="2" cy="17" r="1.900" /></svg>
          </ToolbarRight>
        </ToolbarRow>
      </ToolbarShell>
      <Bookmarks>
        <svg width="20" height="20" viewBox="0 0 20 20" fill="none" stroke="#3c4043" strokeWidth="2"><path d="M2 2h5.500v5.500H2zM12 2h5.500v5.500H12zM2 12h5.500v5.500H2zM12 12h5.500v5.500H12z" /></svg>
        <Sep $l={19} $r={18} />
        {bookmarks.map(([t, icon, w, ls], i) => (
          <Bookmark key={i} $w={w} $ls={ls}>{icon}<span>{t}</span></Bookmark>
        ))}
      </Bookmarks>

      <Viewport>
        <Page>
          <Heading><HeadIcon />Text-to-Speech GenAI with Coqui TTS</Heading>
          <Lead>Convert text to speech using Coqui TTS with support for different languages and speakers.</Lead>
          <Columns>
            <Column $w={900}>
              <Card $h={160} $mb={20}>
                <Label>Enter Text</Label>
                <Field $h={98} $pad="12px 12.5px">Hello, how r u doing?</Field>
              </Card>
              <Card $h={110} $mb={48} $row>
                <Group $w={419} $mr={30}>
                  <Label>Select Voice</Label>
                  <Select $h={49} $pad="0 32px 0 20px">
                    Sofia Hellen
                    <svg width="12" height="6" viewBox="0 0 12 6"><path d="M0 0h12L6 6z" fill="#27272a" /></svg>
                  </Select>
                </Group>
                <Group $w={400}>
                  <Label>Select Localization</Label>
                  <Radios>
                    <Radio $w={139}><Dot $on />US English</Radio>
                    <Radio $w={181}><Dot />Spanish (LatAm)</Radio>
                  </Radios>
                </Group>
              </Card>
              <Card $h={227} $mb={20}>
                <MediaLabel $w={160}><Music size={14} strokeWidth={1.500} />Generated Speech</MediaLabel>
                <MediaTools $w={27}><DownloadIcon /></MediaTools>
                <Bars><AudioBars /></Bars>
                <Times><span>0:02</span><span>0:02</span></Times>
                <Controls>
                  <Volume><SpeakerIcon /><Slider /></Volume>
                  <Transport>
                    <SkipIcon back />
                    <svg width="28" height="34" viewBox="0 0 28 34" fill="#f97316" stroke="#f97316" strokeLinejoin="round"><path d="M1.500 1.500L26.500 17 1.500 32.500z" /></svg>
                    <SkipIcon />
                  </Transport>
                </Controls>
              </Card>
              <Generate>Generate Speech</Generate>
            </Column>
            <Column $w={899}>
              <Card $h={318} $mb={20}>
                <Label>Data Info</Label>
                <Field $h={147} $mb={25} $pad="10px 12px">
                  {"Word Count: 5\nVoice: Sofia Hellen\nLocalization: US English\nLength of Speech: 2.08 seconds\nGeneration Duration: 17.03 seconds"}
                </Field>
                <Label>Status</Label>
                <Field $h={50} $pad="11px 12px">Waveform generated successfully!</Field>
              </Card>
              <Card $h={480} $pad="34px 0 0">
                <MediaLabel $w={109}><ImageIcon size={14} strokeWidth={1.500} />Waveform</MediaLabel>
                <MediaTools $w={53}><Maximize size={18} strokeWidth={2} /><ToolDivider /><DownloadIcon /></MediaTools>
                <PlotHolder><Plot /></PlotHolder>
              </Card>
            </Column>
          </Columns>
        </Page>
        <Scrollbar>
          <Arrow><svg width="10" height="5" viewBox="0 0 10 5"><path d="M0 5h10L5 0z" fill="#a3a3a3" /></svg></Arrow>
          <Thumb />
          <Arrow $end><svg width="10" height="5" viewBox="0 0 10 5"><path d="M0 0h10L5 5z" fill="#505050" /></svg></Arrow>
        </Scrollbar>
      </Viewport>

      <Taskbar>
        <Apps>
          {apps.map((a, i) => (
            <TaskApp key={i}>
              <AppTile $active={a.active}>{a.icon}</AppTile>
              {a.run && <Running $active={a.active} />}
              {a.badge && <Badge $x={29} $y={8} $c={a.badge[1]} $s={a.badge[2]}>{a.badge[0]}</Badge>}
            </TaskApp>
          ))}
          <Stray><StrayIcon /></Stray>
        </Apps>
        <Weather>
          <SmokeIcon />
          <Badge $x={14} $y={7} $c="#c42b1c">1</Badge>
          <TwoLine $ls={0.25}>86°F<br /><span>Smoke</span></TwoLine>
        </Weather>
        <Tray>
          <TrayItem $w={36}><svg width="14" height="8" viewBox="0 0 14 8" fill="none" stroke="#1b1b1b" strokeWidth="1.600"><path d="M1 7l6-6 6 6" /></svg></TrayItem>
          <TrayItem $w={44}><svg width="22" height="15" viewBox="0 0 22 15"><path d="M5 14.200a4 4 0 01-.5-8C5.200 3 7.500 1 10.500 1c3 0 5 1.700 5.700 4.500 3 0 4.800 1.800 4.800 4.300 0 2.600-1.800 4.400-4.300 4.400z" fill="#e6e6e6" stroke="#1b1b1b" strokeWidth="1.300" /><path d="M4.500 6.500C5.200 3.500 7.500 1.700 10.500 1.700c3 0 5 1.500 5.500 4.200L9 10z" fill="#8c8c8c" /></svg></TrayItem>
          <TrayItem $w={30} $j="center"><TwoLine $align="center" $ls={0.2}>ENG<br />IN</TwoLine></TrayItem>
          <TrayItem $w={42.5} $j="flex-end"><svg width="21" height="16" viewBox="0 0 21 16" fill="none" stroke="#1b1b1b" strokeWidth="1.500"><path d="M1 6.200a13.500 13.500 0 0119 0M4 9.200a9.200 9.200 0 0113 0M6.800 12a5.200 5.200 0 017.400 0" /><circle cx="10.500" cy="14" r="1.400" fill="#1b1b1b" stroke="none" /></svg></TrayItem>
          <TrayItem $w={29.5} $j="flex-end"><svg width="21" height="17" viewBox="0 0 21 17" fill="none" stroke="#1b1b1b" strokeWidth="1.200"><path d="M1 6h3l4-4h1v13H8l-4-4H1z" strokeLinejoin="round" /><path d="M12 6c1.200 1.500 1.200 3.500 0 5M15 4c2.200 2.700 2.200 6.300 0 9M18 2c3.200 4 3.200 9 0 13" /></svg></TrayItem>
          <TrayItem $w={30.5} $j="flex-end"><svg width="21" height="17" viewBox="0 0 21 17"><rect x="1.500" y="5" width="16" height="10.500" rx="2.500" fill="none" stroke="#1b1b1b" strokeWidth="1.400" /><rect x="4" y="7.300" width="11" height="6" rx="1" fill="#1b1b1b" /><path d="M19 8v4.500" stroke="#1b1b1b" strokeWidth="2.200" /><path d="M4.500 0L0 6h3l-1 4 5-6H4z" fill="#1b1b1b" stroke="#e0edf9" strokeWidth=".5" /></svg></TrayItem>
          <TrayItem $w={97} $j="flex-end"><TwoLine $align="right" $ls={0.3}>16:01<br />20-11-2024</TwoLine></TrayItem>
          <TrayItem $w={28} $j="flex-end"><svg width="16" height="20" viewBox="0 0 16 20" fill="#003e92"><path d="M8 0a6 6 0 00-6 6v5.500L.3 15.500c-.3.700 0 1.200.7 1.200h14c.7 0 1-.5.7-1.200L14 11.500V6a6 6 0 00-6-6zM5 17.600h6a3 3 0 01-6 0z" /></svg></TrayItem>
        </Tray>
      </Taskbar>
    </Screen>
  );
}
